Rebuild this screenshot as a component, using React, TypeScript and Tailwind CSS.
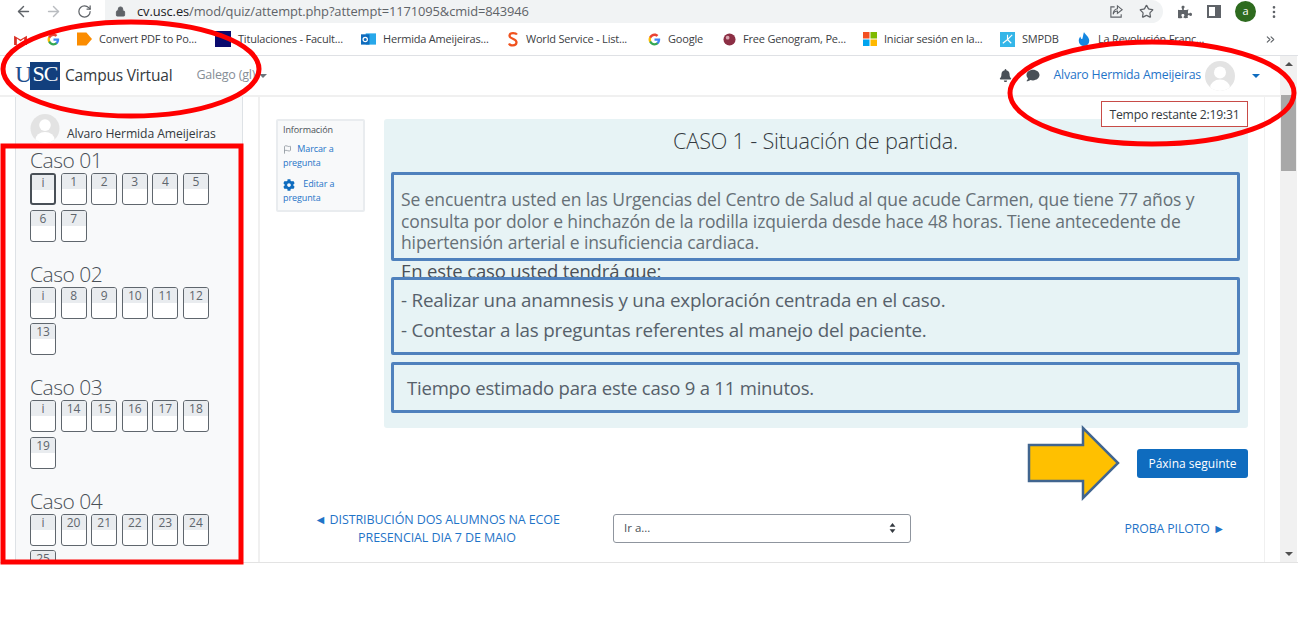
import React from "react";
import { ArrowLeft, ArrowRight, RotateCw, Lock, Star, MoreVertical, ChevronsRight, Flag } from "lucide-react";
import { FaBell, FaComment, FaCog, FaPuzzlePiece } from "react-icons/fa";

const Avatar = ({ cls }: { cls: string }) => (
  <svg viewBox="0 0 30 30" className={cls}>
    <defs>
      <clipPath id="av"><circle cx="15" cy="15" r="15" /></clipPath>
    </defs>
    <circle cx="15" cy="15" r="15" fill="#e3e3e3" />
    <g clipPath="url(#av)" fill="#fff">
      <circle cx="15" cy="11.5" r="6" />
      <ellipse cx="15" cy="27" rx="10" ry="8.5" />
    </g>
  </svg>
);

const Tile = ({ label, current }: { label: string; current?: boolean }) => (
  <div className={current ? "w-[26px] h-[32px] border-2 border-[#495057] rounded-[3px] bg-white overflow-hidden" : "w-[26px] h-[32px] border border-[#5f666d] rounded-[3px] bg-white overflow-hidden"}>
    <div className="h-[15px] bg-[#e9ecef] text-[12px] leading-[15px] text-[#5f666d] text-center">{label}</div>
  </div>
);

const sections: { title: string; tiles: string[] }[] = [
  { title: "Caso 01", tiles: ["i", "1", "2", "3", "4", "5", "6", "7"] },
  { title: "Caso 02", tiles: ["i", "8", "9", "10", "11", "12", "13"] },
  { title: "Caso 03", tiles: ["i", "14", "15", "16", "17", "18", "19"] },
  { title: "Caso 04", tiles: ["i", "20", "21", "22", "23", "24", "25"] },
];

const GoogleG = () => (
  <svg viewBox="0 0 24 24" className="w-[13px] h-[13px]">
    <path fill="#4285F4" d="M22.5 12.2c0-.8-.1-1.500-.2-2.200H12v4.200h5.900c-.3 1.400-1 2.500-2.200 3.300v2.700h3.500c2.100-1.900 3.300-4.700 3.300-8z" />
    <path fill="#34A853" d="M12 23c3 0 5.400-1 7.200-2.700l-3.500-2.700c-1 .7-2.200 1.100-3.700 1.100-2.800 0-5.200-1.900-6.100-4.500H2.300v2.800C4.100 20.500 7.800 23 12 23z" />
    <path fill="#FBBC05" d="M5.900 14.100c-.2-.7-.4-1.400-.4-2.100s.1-1.400.4-2.100V7.100H2.300C1.500 8.600 1 10.200 1 12s.5 3.400 1.300 4.900l3.600-2.800z" />
    <path fill="#EA4335" d="M12 5.400c1.600 0 3 .6 4.100 1.600l3.100-3.100C17.400 2.100 15 1 12 1 7.800 1 4.100 3.500 2.300 7.100l3.600 2.800c.9-2.600 3.300-4.500 6.100-4.500z" />
  </svg>
);

const bookmarks: { icon: React.ReactNode; text: string; cls: string; textCls: string }[] = [
  {
    icon: <svg viewBox="0 0 16 16" className="w-[15px] h-[16px]"><path d="M0 1h10l6 7-6 7H0z" fill="#fb8c00" /></svg>,
    text: "Convert PDF to Po...", cls: "ml-[17px]", textCls: "w-[101px]",
  },
  {
    icon: <svg viewBox="0 0 16 16" className="w-[16px] h-[16px]"><rect width="16" height="16" fill="#0a0a6e" /></svg>,
    text: "Titulaciones - Facult...", cls: "ml-[15px]", textCls: "w-[108px]",
  },
  {
    icon: <svg viewBox="0 0 16 16" className="w-[15px] h-[16px]"><rect x="5" y="2" width="11" height="12" fill="#28a8ea" /><rect y="3" width="9" height="11" fill="#0f6cbd" /><circle cx="4.500" cy="8.500" r="2.300" fill="none" stroke="#fff" strokeWidth="1.300" /></svg>,
    text: "Hermida Ameijeiras...", cls: "ml-[15px]", textCls: "w-[107px]",
  },
  {
    icon: <svg viewBox="0 0 12 16" className="w-[12px] h-[16px]"><path d="M10 3.500C9 2 3 1 2.500 4.500S10 7.500 9.500 11.500 3 15 2 12.500" fill="none" stroke="#f0521e" strokeWidth="2.200" /></svg>,
    text: "World Service - List...", cls: "ml-[17px]", textCls: "w-[107px]",
  },
  { icon: <GoogleG />, text: "Google", cls: "ml-[15px]", textCls: "w-[38px]" },
  {
    icon: <svg viewBox="0 0 14 14" className="w-[13px] h-[13px]"><circle cx="7" cy="7" r="6.500" fill="#8c2f45" /><circle cx="5" cy="5" r="2" fill="#d9a5b0" /></svg>,
    text: "Free Genogram, Pe...", cls: "ml-[17px]", textCls: "w-[104px]",
  },
  {
    icon: <svg viewBox="0 0 14 14" className="w-[14px] h-[14px]"><rect width="6.500" height="6.500" fill="#f25022" /><rect x="7.500" width="6.500" height="6.500" fill="#7fba00" /><rect y="7.500" width="6.500" height="6.500" fill="#00a4ef" /><rect x="7.500" y="7.500" width="6.500" height="6.500" fill="#ffb900" /></svg>,
    text: "Iniciar sesión en la...", cls: "ml-[16px]", textCls: "w-[101px]",
  },
  {
    icon: <svg viewBox="0 0 16 16" className="w-[15px] h-[15px]"><rect width="16" height="16" fill="#35b6e8" /><path d="M3 12l5-4 5-5M8 8l4 4M8 8V3" stroke="#fff" strokeWidth="1.200" /></svg>,
    text: "SMPDB", cls: "ml-[15px]", textCls: "w-[38px]",
  },
  {
    icon: <svg viewBox="0 0 14 16" className="w-[14px] h-[14px]"><path d="M7 0c1 3 6 5 6 10a6 6 0 0 1-12 0c0-2 1-4 2-5 0 2 1 3 2 3 1-3 1-5 2-8z" fill="#1486e0" /></svg>,
    text: "La Revolución Franc...", cls: "ml-[17px]", textCls: "w-[106px]",
  },
];

export default function App() {
  return (
    <div className="relative w-[1298px] h-[619px] overflow-hidden bg-white font-['Open_Sans',sans-serif] text-[#495057]">
      {/* browser toolbar */}
      <div className="h-[23px] flex items-center pl-[15px] pr-[14px]">
        <ArrowLeft className="w-[17px] h-[17px] text-[#5f6368]" />
        <ArrowRight className="w-[17px] h-[17px] text-[#b9bcc0] ml-[13px]" />
        <RotateCw className="w-[15px] h-[15px] text-[#5f6368] ml-[15px]" />
        <div className="ml-[13px] w-[1058px] h-[23px] bg-[#f1f3f4] rounded-r-[14px] flex items-center pl-[10px] pr-[9px]">
          <Lock className="w-[11px] h-[11px] text-[#5f6368]" fill="#5f6368" />
          <span className="ml-[11px] text-[12.900px] leading-none tracking-[-0.1px] text-[#5f6368]"><span className="text-[#202124]">cv.usc.es</span>/mod/quiz/attempt.php?attempt=1171095&amp;cmid=843946</span>
          <svg viewBox="0 0 16 16" className="ml-auto w-[15px] h-[15px]" fill="none" stroke="#5f6368" strokeWidth="1.200">
            <path d="M6 3H2v11h11v-3" />
            <path d="M9 2l5 4-5 4V7.500C6.500 7.500 5 9 4.500 11c0-3.500 1.500-5.500 4.500-6z" />
          </svg>
          <Star className="ml-[15px] w-[15px] h-[15px] text-[#5f6368]" />
        </div>
        <FaPuzzlePiece className="ml-[15px] w-[14px] h-[14px] text-[#5f6368]" />
        <div className="ml-[15px] w-[14px] h-[13px] border-2 border-[#5f6368] border-r-[6px]" />
        <div className="ml-[14px] w-[21px] h-[21px] rounded-full bg-[#2e6b1f] text-white text-[11px] flex items-center justify-center">a</div>
        <MoreVertical className="ml-[10px] w-[16px] h-[16px] text-[#5f6368]" />
      </div>
      {/* bookmarks */}
      <div className="h-[33px] flex items-center pl-[14px] border-b border-[#dfe1e5]">
        <svg viewBox="0 0 14 12" className="w-[13px] h-[11px]"><path d="M0 2v10h3V5l4 3 4-3v7h3V2L7 6z" fill="#d93025" /></svg>
        <div className="ml-[20px]"><GoogleG /></div>
        {bookmarks.map((b) => (
          <div key={b.text} className={"flex items-center " + b.cls}>
            {b.icon}
            <span className={"ml-[7px] text-[11px] leading-[14px] whitespace-nowrap text-[#3c4043] tracking-[-0.2px] " + b.textCls}>{b.text}</span>
          </div>
        ))}
        <ChevronsRight className="ml-[60px] w-[13px] h-[13px] text-[#5f6368]" />
      </div>
      <div className="flex h-[507px] border-b border-[#e3e3e3]">
        <div className="w-[1280px] flex flex-col">
          {/* moodle navbar */}
          <div className="h-[41px] flex items-center pl-[15px] pr-[20px] border-b-2 border-[#f0f0f0]">
            <div className="flex h-[28px] w-[45px] font-['Liberation_Serif',serif]">
              <span className="w-[15px] text-[#1f4e8c] text-[24px] leading-[25px]">U</span>
              <span className="w-[30px] bg-[#123f7d] text-white text-[22px] leading-[23px] text-center tracking-[-1px]">SC</span>
            </div>
            <span className="ml-[5px] text-[15.500px] tracking-[-0.2px] text-[#343a40]">Campus Virtual</span>
            <span className="ml-[24px] text-[12.500px] tracking-[-0.2px] text-[#868e96]">Galego ‎(gl)‎</span>
            <span className="ml-[4px] w-0 h-0 border-x-[4px] border-x-transparent border-t-[4px] border-t-[#6c757d]" />
            <FaBell className="ml-auto w-[13px] h-[13px] text-[#495057]" />
            <FaComment className="ml-[14px] w-[14px] h-[13px] text-[#495057]" />
            <span className="ml-[13px] text-[12.300px] tracking-[-0.2px] text-[#1f74c8]">Alvaro Hermida Ameijeiras</span>
            <Avatar cls="ml-[4px] w-[30px] h-[30px]" />
            <span className="ml-[17px] w-0 h-0 border-x-[4px] border-x-transparent border-t-[4px] border-t-[#0f6cbf]" />
          </div>
          <div className="flex-1 flex pl-[15px] overflow-hidden">
            {/* quiz navigation */}
            <aside className="w-[228px] h-full bg-[#f8f9fa] border-x border-[#dee2e6] pl-[14px] pt-[17px] overflow-hidden">
              <div className="flex items-end h-[29px]">
                <Avatar cls="w-[30px] h-[29px]" />
                <span className="ml-[7px] text-[12.200px] leading-[18px] tracking-[-0.1px] text-[#343a40] whitespace-nowrap">Alvaro Hermida Ameijeiras</span>
              </div>
              <div className="mt-[6px]">
                {sections.map((s) => (
                  <section key={s.title} className="mb-[21px]">
                    <h3 className="h-[24px] text-[21px] leading-[22px] font-light tracking-[-0.5px] text-[#495057]">{s.title}</h3>
                    <div className="flex flex-wrap w-[190px] gap-x-[4.600px] gap-y-[4.500px]">
                      {s.tiles.map((t, i) => (
                        <Tile key={t} label={t} current={s.title === "Caso 01" && i === 0} />
                      ))}
                    </div>
                  </section>
                ))}
              </div>
            </aside>
            <div className="w-[15px]" />
            {/* main region */}
            <main className="w-[1007px] h-full border-x-2 border-x-[#f0f0f0] border-r-[1px] pl-[16px] pr-[16px] pt-[22px]">
              <div className="flex">
                <div className="w-[89px] h-[93px] bg-[#f8f9fa] border-2 border-[#e9ecef] rounded-[2px] px-[5px] pt-[2px] text-[9px] leading-[14px] text-[#1f74c8] tracking-[-0.1px]">
                  <div className="text-[#495057] mb-[5px]">Información</div>
                  <div className="mb-[7px]">
                    <Flag className="inline w-[9px] h-[9px] text-[#868e96] mr-[3px]" /> Marcar a pregunta
                  </div>
                  <div>
                    <FaCog className="inline w-[12px] h-[12px] text-[#0f6cbf] mr-[6px]" /> Editar a pregunta
                  </div>
                </div>
                <div className="ml-[19px] w-[864px] h-[309px] bg-[#e7f3f5] rounded-[3px] pl-[7px] pr-[8px]">
                  <h2 className="h-[53px] text-center text-[21.700px] font-light leading-[44px] tracking-[-0.2px] text-[#343a40]">CASO 1 - Situación de partida.</h2>
                  <div className="h-[89px] border-[3px] border-[#4f81bd] rounded-[2px] pl-[7px] pt-[14px] text-[17.500px] leading-[21.500px] tracking-[-0.12px] text-[#667077]">
                    Se encuentra usted en las Urgencias del Centro de Salud al que acude Carmen, que tiene 77 años y consulta por dolor e hinchazón de la rodilla izquierda desde hace 48 horas. Tiene antecedente de hipertensión arterial e insuficiencia cardiaca.
                  </div>
                  <div className="h-[16px] overflow-hidden pl-[10px] text-[18.500px] leading-[20px] text-[#495057] tracking-[-0.15px]">En este caso usted tendrá que:</div>
                  <div className="h-[78px] border-[3px] border-[#4f81bd] rounded-[2px] pl-[7px] pt-[6px] text-[18.800px] leading-[29.500px] tracking-[-0.2px] text-[#56606a]">
                    <div>- Realizar una anamnesis y una exploración centrada en el caso.</div>
                    <div>- Contestar a las preguntas referentes al manejo del paciente.</div>
                  </div>
                  <div className="mt-[7px] h-[51px] border-[3px] border-[#4f81bd] rounded-[2px] pl-[13px] pt-[1px] flex items-center text-[18.500px] tracking-[-0.2px] text-[#56606a]">
                    Tiempo estimado para este caso 9 a 11 minutos.
                  </div>
                </div>
              </div>
              <div className="flex justify-end mt-[21px]">
                <div className="w-[111px] h-[29px] bg-[#0f6cbf] rounded-[3px] text-white text-[12px] flex items-center justify-center">Páxina seguinte</div>
              </div>
              <div className="flex items-center mt-[31px]">
                <div className="ml-[30px] w-[262px] pt-[2px] text-center text-[12.500px] leading-[18px] tracking-[-0.1px] text-[#1f74c8]">◄ DISTRIBUCIÓN DOS ALUMNOS NA ECOE PRESENCIAL DIA 7 DE MAIO</div>
                <div className="ml-[45px] w-[298px] h-[29px] border border-[#8f959e] rounded-[3px] flex items-center pl-[10px] pr-[14px] text-[11.500px] text-[#495057]">
                  Ir a...
                  <svg viewBox="0 0 8 12" className="ml-auto w-[7px] h-[10px]"><path d="M4 0l3.500 4.500h-7zM4 12L.5 7.500h7z" fill="#343a40" /></svg>
                </div>
                <div className="ml-auto mr-[23px] pt-[2px] text-[12.300px] tracking-[-0.1px] text-[#1f74c8]">PROBA PILOTO ►</div>
              </div>
            </main>
          </div>
        </div>
        {/* page scrollbar */}
        <div className="w-[17px] bg-[#f1f1f1] flex flex-col items-center">
          <div className="mt-[6px] w-0 h-0 border-x-[4px] border-x-transparent border-b-[4px] border-b-[#505050]" />
          <div className="mt-[29px] w-[15px] h-[76px] bg-[#a8a8a8]" />
          <div className="mt-auto mb-[6px] w-0 h-0 border-x-[4px] border-x-transparent border-t-[4px] border-t-[#505050]" />
        </div>
      </div>
      {/* timer */}
      <div className="absolute left-[1101px] top-[101px] w-[147px] h-[26px] pt-[3px] bg-white border border-[#c84b47] flex items-center justify-center text-[12.200px] tracking-[-0.2px] text-[#343a40]">Tempo restante 2:19:31</div>
      {/* annotations drawn over the page */}
      <svg className="absolute inset-0 pointer-events-none" width="1298" height="619" viewBox="0 0 1298 619">
        <ellipse cx="131" cy="69" rx="128" ry="47" fill="none" stroke="#ff0000" strokeWidth="5" />
        <ellipse cx="1152" cy="93" rx="142" ry="51" fill="none" stroke="#ff0000" strokeWidth="5" />
        <rect x="3" y="146" width="238" height="416" fill="none" stroke="#ff0000" strokeWidth="5" />
        <path d="M1029 445h54v-17l35 35-35 35v-17h-54z" fill="#ffc000" stroke="#41658f" strokeWidth="2.500" />
      </svg>
    </div>
  );
}
